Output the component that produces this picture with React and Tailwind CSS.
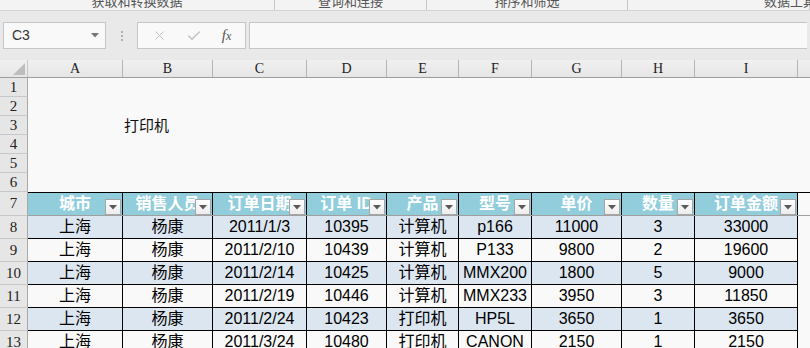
import { X, Check } from 'lucide-react'

const COLS = ['A', 'B', 'C', 'D', 'E', 'F', 'G', 'H', 'I', 'J']
const WIDTHS = [95, 90, 94, 80, 72, 73, 90, 73, 103, 40]

const HEAD = ['城市', '销售人员', '订单日期', '订单 ID', '产品', '型号', '单价', '数量', '订单金额']

const ROWS = [
  ['上海', '杨康', '2011/1/3', '10395', '计算机', 'p166', '11000', '3', '33000'],
  ['上海', '杨康', '2011/2/10', '10439', '计算机', 'P133', '9800', '2', '19600'],
  ['上海', '杨康', '2011/2/14', '10425', '计算机', 'MMX200', '1800', '5', '9000'],
  ['上海', '杨康', '2011/2/19', '10446', '计算机', 'MMX233', '3950', '3', '11850'],
  ['上海', '杨康', '2011/2/24', '10423', '打印机', 'HP5L', '3650', '1', '3650'],
  ['上海', '杨康', '2011/3/24', '10480', '打印机', 'CANON', '2150', '1', '2150'],
]

const serif = { fontFamily: '"Liberation Serif", "Noto Sans CJK SC", serif' }
const sans = { fontFamily: '"Liberation Sans", "Noto Sans CJK SC", sans-serif' }

function FilterButton() {
  return (
    <span className="absolute right-[1px] top-[6px] flex h-[16px] w-[16px] items-center justify-center border border-[#a6a6a6] bg-gradient-to-b from-white to-[#ececec]">
      <svg width="8" height="5" viewBox="0 0 8 5">
        <path d="M0 0h8L4 4.5z" fill="#5a5a5a" />
      </svg>
    </span>
  )
}

function RowHead({ n, h }) {
  return (
    <div
      className="flex w-[28px] shrink-0 items-center justify-center border-b border-r border-[#c8c8c8] border-r-[#a8a8a8] bg-[#e6e6e6] text-[15px] text-[#222]"
      style={{ height: h, ...serif }}
    >
      {n}
    </div>
  )
}

function Ribbon() {
  const groups = [
    { label: '获取和转换数据', w: 275 },
    { label: '查询和连接', w: 152 },
    { label: '排序和筛选', w: 201 },
    { label: '数据工具', w: 182, left: true },
  ]
  return (
    <div className="flex h-[11px] overflow-hidden border-b border-[#d4d4d4] bg-[#f3f3f3]">
      {groups.map((g) => (
        <div
          key={g.label}
          className={`flex h-[10px] shrink-0 border-r border-[#c6c6c6] ${g.left ? 'justify-start pl-[136px]' : 'justify-center'}`}
          style={{ width: g.w }}
        >
          <span
            className="mt-[-7px] whitespace-nowrap text-[13px] leading-[16px] text-[#555]"
            style={{ fontFamily: '"Noto Sans CJK SC", sans-serif' }}
          >
            {g.label}
          </span>
        </div>
      ))}
    </div>
  )
}

function FormulaBar() {
  return (
    <div className="flex h-[49px] items-center bg-[#e9e9e9] px-[3px]">
      <div className="flex h-[27px] w-[103px] items-center justify-between border border-[#c6c6c6] bg-[#f9f9f9] pl-[8px] pr-[6px]">
        <span className="text-[14px] text-[#333]" style={sans}>C3</span>
        <svg width="8" height="5" viewBox="0 0 8 5">
          <path d="M0 0h8L4 4.5z" fill="#777" />
        </svg>
      </div>
      <div className="flex w-[31px] flex-col items-center gap-[2px]">
        <span className="h-[2px] w-[2px] bg-[#b0b0b0]" />
        <span className="h-[2px] w-[2px] bg-[#b0b0b0]" />
        <span className="h-[2px] w-[2px] bg-[#b0b0b0]" />
      </div>
      <div className="flex h-[27px] w-[109px] items-center justify-around border border-[#c6c6c6] bg-[#f9f9f9] px-[4px]">
        <X size={15} strokeWidth={1.6} color="#c2c2c2" />
        <Check size={16} strokeWidth={2.2} color="#c2c2c2" />
        <span className="text-[15px] italic text-[#555]" style={serif}>f<span className="text-[12px]">x</span></span>
      </div>
      <div className="ml-[3px] h-[27px] flex-1 border border-[#c6c6c6] border-r-0 bg-[#f9f9f9]" />
    </div>
  )
}

export default function App() {
  return (
    <div className="h-[348px] w-[810px] overflow-hidden bg-[#f9f9f9]">
      <Ribbon />
      <FormulaBar />

      {/* column letters */}
      <div className="flex h-[18px] border-b border-[#9e9e9e] bg-gradient-to-b from-[#f0f0f0] to-[#e6e6e6]">
        <div className="relative w-[28px] shrink-0 border-r border-[#c6c6c6]">
          <svg className="absolute bottom-[2px] right-[2px]" width="12" height="12" viewBox="0 0 12 12">
            <path d="M12 0V12H0z" fill="#bdbdbd" />
          </svg>
        </div>
        {COLS.map((c, i) => (
          <div
            key={c}
            className="flex shrink-0 items-center justify-center border-r border-[#b4b4b4] text-[14px] text-[#222]"
            style={{ width: WIDTHS[i], ...serif }}
          >
            {c}
          </div>
        ))}
      </div>

      {/* rows 1-6 */}
      {[1, 2, 3, 4, 5, 6].map((n) => (
        <div key={n} className="flex">
          <RowHead n={n} h={19} />
          <div className="flex h-[19px] items-center">
            {n === 3 && (
              <span
                className="ml-[96px] text-[15px] text-[#111]"
                style={{ fontFamily: '"Noto Sans CJK SC", sans-serif' }}
              >
                打印机
              </span>
            )}
          </div>
        </div>
      ))}

      {/* table header row 7 */}
      <div className="flex">
        <RowHead n={7} h={24} />
        <div className="flex h-[24px] border-b border-t border-b-[#a0a0a0] border-t-black">
          {HEAD.map((h, i) => (
            <div
              key={h}
              className="relative flex shrink-0 items-center justify-center overflow-hidden border-r border-black bg-[#92cddc] text-[16px] font-bold text-white"
              style={{ width: WIDTHS[i], ...sans }}
            >
              <span className="whitespace-nowrap">{h}</span>
              <FilterButton />
            </div>
          ))}
          <div className="w-[40px] shrink-0 bg-[#f9f9f9]" />
        </div>
      </div>

      {/* data rows */}
      {ROWS.map((r, ri) => (
        <div key={ri} className="flex">
          <RowHead n={ri + 8} h={23} />
          <div className="flex h-[23px]">
            {r.map((v, i) => (
              <div
                key={i}
                className={`flex shrink-0 items-center justify-center whitespace-nowrap border-b border-r border-black text-[16px] text-black ${ri % 2 === 0 ? 'bg-[#dce6f1]' : 'bg-[#f9f9f9]'}`}
                style={{ width: WIDTHS[i], ...sans }}
              >
                {v}
              </div>
            ))}
          </div>
        </div>
      ))}
    </div>
  )
}
